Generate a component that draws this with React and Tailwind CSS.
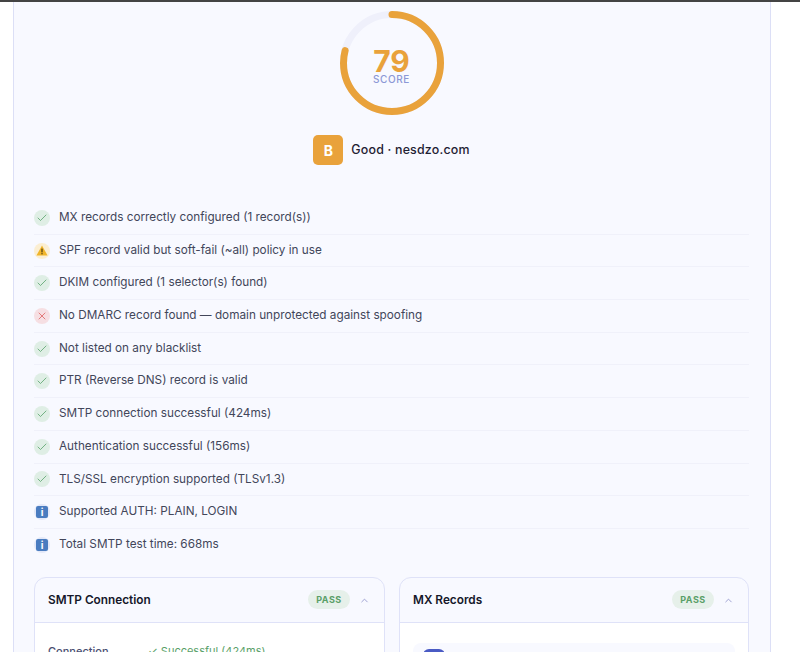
import React from "react";
import { ChevronUp, Check, X } from "lucide-react";

const checks = [
  ["ok", "MX records correctly configured (1 record(s))"],
  ["warn", "SPF record valid but soft-fail (~all) policy in use"],
  ["ok", "DKIM configured (1 selector(s) found)"],
  ["fail", "No DMARC record found — domain unprotected against spoofing"],
  ["ok", "Not listed on any blacklist"],
  ["ok", "PTR (Reverse DNS) record is valid"],
  ["ok", "SMTP connection successful (424ms)"],
  ["ok", "Authentication successful (156ms)"],
  ["ok", "TLS/SSL encryption supported (TLSv1.3)"],
  ["info", "Supported AUTH: PLAIN, LOGIN"],
  ["info", "Total SMTP test time: 668ms"],
];

const StatusIcon = ({ type }) => {
  if (type === "ok") {
    return (
      <div className="w-4 h-4 rounded-full bg-[#dfeee5] flex items-center justify-center shrink-0">
        <Check size={12} strokeWidth={1.5} className="text-[#4f9d63]" />
      </div>
    );
  }
  if (type === "fail") {
    return (
      <div className="w-4 h-4 rounded-full bg-[#f6dfe3] flex items-center justify-center shrink-0">
        <X size={12} strokeWidth={1.5} className="text-[#dc5a5a]" />
      </div>
    );
  }
  if (type === "warn") {
    return (
      <div className="w-4 h-4 rounded-full bg-[#fbeed2] flex items-center justify-center shrink-0">
        <svg width="12" height="11" viewBox="0 0 12 11">
          <path d="M6 .5 11.6 10.5H.4Z" fill="#f0b429" />
          <rect x="5.4" y="3.6" width="1.2" height="3.8" fill="#4a3a14" />
          <rect x="5.4" y="8.1" width="1.2" height="1.2" fill="#4a3a14" />
        </svg>
      </div>
    );
  }
  return (
    <div className="w-4 h-4 rounded-full bg-[#e3e8f8] flex items-center justify-center shrink-0">
      <div className="w-3 h-3 rounded-[2px] bg-[#4a7cc0] flex items-center justify-center text-white text-[10px] font-bold leading-none">i</div>
    </div>
  );
};

const ScoreRing = () => {
  const r = 48.5;
  const c = 2 * Math.PI * r;
  return (
    <div className="relative w-[104px] h-[104px]">
      <svg width="104" height="104" viewBox="0 0 104 104" className="-rotate-90">
        <circle cx="52" cy="52" r={r} fill="none" stroke="#eff0fb" strokeWidth="7" />
        <circle cx="52" cy="52" r={r} fill="none" stroke="#e9a23b" strokeWidth="7" strokeLinecap="round" strokeDasharray={`${c * 0.79} ${c}`} />
      </svg>
      <div className="absolute inset-0 flex flex-col items-center justify-center pt-[6px]">
        <div className="text-[30px] font-bold leading-[26px] text-[#e9a23b]">79</div>
        <div className="text-[10px] leading-[10px] font-medium tracking-[0.6px] text-[#8c98d6]">SCORE</div>
      </div>
    </div>
  );
};

const CardHead = ({ title }) => (
  <div className="h-[45px] flex items-center justify-between pl-[13px] pr-[14px] border-b border-[#dfe2f8]">
    <div className="text-[11.8px] font-semibold text-[#15172a] pt-[2px]">{title}</div>
    <div className="flex items-center gap-[9px]">
      <div className="h-[19px] w-[42px] rounded-full bg-[#e6f0ea] text-[#5a9f68] text-[9px] font-bold tracking-[0.5px] flex items-center justify-center">PASS</div>
      <ChevronUp size={11} strokeWidth={1.75} className="text-[#8c90c9] mt-[2px]" />
    </div>
  </div>
);

export default function App() {
  return (
    <div className="h-[652px] overflow-hidden bg-white font-['Inter',sans-serif]">
      <div className="h-[2px] bg-[#444]" />
      <div className="ml-[13px] w-[758px] h-[650px] bg-[#f8f9ff] border-x border-[#dcdff6] pl-[20px] pr-[21px]">
        <div className="flex flex-col items-center pt-[9px]">
          <ScoreRing />
          <div className="flex items-center gap-[8px] mt-[20px]">
            <div className="w-[30px] h-[30px] rounded-[5px] bg-[#e9a23b] text-white text-[14px] font-bold flex items-center justify-center">B</div>
            <div className="text-[12.4px] font-medium text-[#1f2133] tracking-[0.2px]">Good · nesdzo.com</div>
          </div>
        </div>
        <div className="mt-[37px]">
          {checks.map(([type, text], i) => (
            <div key={i} className={"h-[32.7px] flex items-center gap-[9px] " + (i < checks.length - 1 ? "border-b border-[#f0f1fa]" : "")}>
              <StatusIcon type={type} />
              <div className="text-[11.75px] text-[#42465a]">{text}</div>
            </div>
          ))}
        </div>
        <div className="flex gap-[14px] mt-[15px]">
          <div className="w-[351px] rounded-t-[12px] border border-[#dfe2f8] h-[100px] overflow-hidden">
            <CardHead title="SMTP Connection" />
            <div className="bg-white h-full pl-[13px] pt-[21px] flex text-[11px] leading-[14px]">
              <div className="w-[100px] font-medium text-[#4a4f72]">Connection</div>
              <div className="text-[#5a9f68]">✓ Successful (424ms)</div>
            </div>
          </div>
          <div className="w-[350px] rounded-t-[12px] border border-[#dfe2f8] h-[100px] overflow-hidden">
            <CardHead title="MX Records" />
            <div className="bg-white h-full px-[13px] pt-[20px]">
              <div className="h-[60px] rounded-[8px] bg-[#f8f9ff] pl-[10px] pt-[6px]">
                <div className="w-[22px] h-[22px] rounded-[6px] bg-[#4a5bc4]" />
              </div>
            </div>
          </div>
        </div>
      </div>
    </div>
  );
}
